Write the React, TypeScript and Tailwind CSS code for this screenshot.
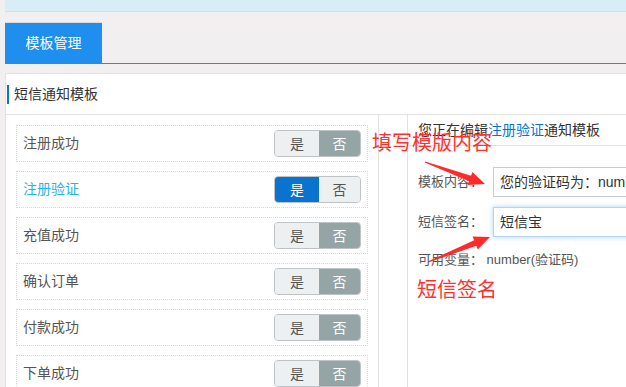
const templates = [
  { name: "注册成功", on: false },
  { name: "注册验证", on: true },
  { name: "充值成功", on: false },
  { name: "确认订单", on: false },
  { name: "付款成功", on: false },
  { name: "下单成功", on: false },
];

function Toggle({ on }: { on: boolean }) {
  return (
    <div className="flex h-[27px] w-[87px] overflow-hidden rounded-[4px] border border-[#bdc3c7] text-[14px] leading-none">
      <span
        className={`flex w-[44px] items-center justify-center ${
          on ? "bg-[#0a73d0] text-white" : "bg-[#ecf0f1] text-[#555]"
        }`}
      >
        是
      </span>
      <span
        className={`flex flex-1 items-center justify-center ${
          on ? "bg-[#ecf0f1] text-[#555]" : "bg-[#95a5a6] text-white"
        }`}
      >
        否
      </span>
    </div>
  );
}

export default function App() {
  return (
    <div className="relative h-[387px] w-[626px] overflow-hidden bg-[#f1efef] pl-[5px] font-['Liberation_Sans','Noto_Sans_CJK_SC',sans-serif]">
      {/* alert strip */}
      <div className="h-[12px] border-b border-[#c6e3ef] bg-[#d9edf7]" />

      {/* tabs */}
      <div className="mt-[10px] flex border-b border-[#1f8fef]">
        <div className="flex h-[41px] w-[97px] items-center justify-center border-t border-[#dcdcdc] bg-[#1f8fef] text-[14px] text-white">
          模板管理
        </div>
      </div>

      {/* panel */}
      <div className="mt-[9px] w-[700px] border border-[#e2e2e2] bg-white">
        <div className="flex h-[41px] items-center border-b border-[#e2e2e2]">
          <span className="ml-[1px] h-[19px] w-[2px] bg-[#0a73d0]" />
          <span className="ml-[5px] text-[14px] text-[#333]">短信通知模板</span>
        </div>

        <div className="flex">
          {/* template list */}
          <div className="w-[373px] border-r border-[#e2e2e2] px-[10px] pt-[10px]">
            {templates.map((t) => (
              <div
                key={t.name}
                className="mb-[9px] flex h-[37px] items-center justify-between border border-dotted border-[#d6d6d6] pl-[6px] pr-[6px]"
              >
                <span className={`text-[14px] ${t.on ? "text-[#2bb1ec]" : "text-[#555]"}`}>{t.name}</span>
                <Toggle on={t.on} />
              </div>
            ))}
          </div>

          {/* editor */}
          <div className="ml-[28px] flex-1 border-l border-[#e2e2e2]">
            <div className="flex h-[31px] items-center border-b border-[#e2e2e2] pl-[10px] text-[14px] text-[#333]">
              您正在编辑<span className="text-[#0a73d0]">注册验证</span>通知模板
            </div>
            <div className="pl-[10px] pt-[21px] text-[13px] text-[#555]">
              <div className="flex items-center">
                <span className="w-[75px]">模板内容：</span>
                <div className="flex h-[30px] flex-1 items-center border border-[#ccc] pl-[6px] text-[14px] text-[#333]">
                  您的验证码为：number
                </div>
              </div>
              <div className="mt-[10px] flex items-center">
                <span className="w-[75px]">短信签名：</span>
                <div className="flex h-[30px] flex-1 items-center border border-[#b3d4f2] pl-[6px] text-[14px] text-[#333] shadow-[0_0_5px_rgba(102,175,233,0.55)]">
                  短信宝
                </div>
              </div>
              <div className="mt-[13px] leading-[20px]">
                可用变量：&nbsp;number(验证码)
              </div>
            </div>
          </div>
        </div>
      </div>

      {/* red annotations */}
      <span className="absolute left-[372px] top-[130px] text-[20px] leading-[26px] text-[#ff3030]">
        填写模版内容
      </span>
      <span className="absolute left-[417px] top-[277px] text-[20px] leading-[26px] text-[#ff3030]">
        短信签名
      </span>
      <svg className="absolute left-0 top-0" width="626" height="387" viewBox="0 0 626 387">
        <polygon
          points="425.2,161.5 471,175.7 472.4,171.9 485,184 467.6,185.1 469,181.3 424.8,162.5"
          fill="#ff2a2a"
        />
        <polygon
          points="427.8,261.5 474.1,240.2 472.6,236.5 490,237 477.8,249.5 476.3,245.8 428.2,262.5"
          fill="#ff2a2a"
        />
      </svg>
    </div>
  );
}
